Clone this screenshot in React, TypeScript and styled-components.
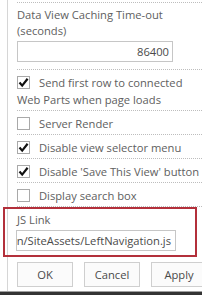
import React from "react";
import styled, { createGlobalStyle } from "styled-components";

const GlobalStyle = createGlobalStyle`
  html, body {
    margin: 0;
    padding: 0;
    background: #ffffff;
    overflow: hidden;
  }
  body {
    font-family: "Open Sans", "Noto Sans", sans-serif;
    font-size: 11.2px;
    color: #606060;
  }
`;

const Screen = styled.div`
  width: 202px;
  height: 295px;
  display: flex;
  flex-direction: column;
  overflow: hidden;
`;

const Pane = styled.div`
  flex: 1;
  margin-left: 7px;
  border-left: 1px solid #d6d6d6;
  padding: 2px 0 0 9px;
  display: flex;
  flex-direction: column;
`;

const Section = styled.div<{ $top?: number; $bottom?: number }>`
  border-top: 1px dotted #bdbdbd;
  padding: ${(p) => p.$top ?? 4}px 0 ${(p) => p.$bottom ?? 2}px 0;
`;

const Label = styled.div`
  line-height: 16px;
  padding-top: 1px;
`;

const TextBox = styled.div<{ $align?: "left" | "right" }>`
  box-sizing: border-box;
  height: 21px;
  width: 156px;
  margin-top: 2px;
  border: 1px solid #c6c6c6;
  background: #fff;
  display: flex;
  align-items: center;
  justify-content: ${(p) => (p.$align === "right" ? "flex-end" : "flex-start")};
  padding: 0 3px;
  color: #4a4a4a;
  white-space: nowrap;
  overflow: hidden;
`;

const CheckRow = styled.label`
  display: flex;
  align-items: flex-start;
  gap: 9px;
  line-height: 17px;
  white-space: nowrap;
`;

const Box = styled.span`
  flex: none;
  box-sizing: border-box;
  width: 13px;
  height: 13px;
  margin-top: 2px;
  border: 1px solid #a9a9a9;
  background: #fff;
  display: flex;
  align-items: center;
  justify-content: center;
`;

const WrapLine = styled.div`
  line-height: 17px;
`;

const LinkSection = styled.div`
  position: relative;
  border-top: 1px dotted #bdbdbd;
  padding: 4px 0 6px 0;
`;

const Highlight = styled.div`
  position: absolute;
  left: -14px;
  right: 5px;
  top: 0px;
  bottom: 0px;
  border: 2.5px solid #b3303b;
  pointer-events: none;
`;

const LinkLabel = styled.div`
  line-height: 16px;
  padding-top: 1px;
`;

const LinkBox = styled(TextBox)`
  width: 160px;
  margin-left: -1px;
  margin-top: 2px;
  padding-right: 4px;
`;

const Buttons = styled.div`
  display: flex;
  gap: 11px;
  margin-top: 5px;
`;

const Button = styled.button`
  flex: none;
  box-sizing: border-box;
  width: 56px;
  height: 25px;
  border: 1px solid #cfcfcf;
  background: #fbfbfb;
  font-family: "Open Sans", "Noto Sans", sans-serif;
  font-size: 11.2px;
  color: #4a4a4a;
  padding: 0;
`;

const BottomEdge = styled.div`
  height: 3px;
  background: #343434;
  border-top: 1px solid #a0a0a0;
`;

function Check({ on }: { on: boolean }) {
  return (
    <Box>
      {on && (
        <svg width="11" height="11" viewBox="0 0 11 11">
          <path d="M1.5 5.5 L4.2 8.6 L9.6 1.8" fill="none" stroke="#111" strokeWidth="2.2" />
        </svg>
      )}
    </Box>
  );
}

const options = [
  { text: "Server Render", on: false },
  { text: "Disable view selector menu", on: true },
  { text: "Disable 'Save This View' button", on: true },
  { text: "Display search box", on: false },
];

export default function App() {
  return (
    <Screen>
      <GlobalStyle />
      <Pane>
        <Section $top={3} $bottom={7}>
          <Label>
            Data View Caching Time-out
            <br />
            (seconds)
          </Label>
          <TextBox $align="right">86400</TextBox>
        </Section>
        <Section>
          <CheckRow>
            <Check on />
            <span>Send first row to connected</span>
          </CheckRow>
          <WrapLine>Web Parts when page loads</WrapLine>
        </Section>
        {options.map((o) => (
          <Section key={o.text}>
            <CheckRow>
              <Check on={o.on} />
              <span>{o.text}</span>
            </CheckRow>
          </Section>
        ))}
        <LinkSection>
          <Highlight />
          <LinkLabel>JS Link</LinkLabel>
          <LinkBox $align="right">~sitecollection/SiteAssets/LeftNavigation.js</LinkBox>
        </LinkSection>
        <Buttons>
          <Button>OK</Button>
          <Button>Cancel</Button>
          <Button>Apply</Button>
        </Buttons>
      </Pane>
      <BottomEdge />
    </Screen>
  );
}
